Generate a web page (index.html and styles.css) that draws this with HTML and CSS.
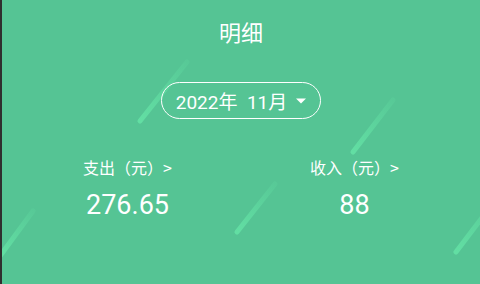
FILE: index.html
```html
<!DOCTYPE html>
<html lang="zh">
<head>
<meta charset="utf-8">
<link rel="stylesheet" href="styles.css">
</head>
<body>
<div class="page">
  <svg class="streaks" width="480" height="284" viewBox="0 0 480 284" aria-hidden="true">
    <defs>
      <linearGradient id="g1" gradientUnits="userSpaceOnUse" x1="140" y1="121" x2="187" y2="62">
        <stop offset="0" stop-color="#62dea3"/><stop offset="1" stop-color="#62dea3" stop-opacity="0.2"/>
      </linearGradient>
      <linearGradient id="g2" gradientUnits="userSpaceOnUse" x1="353" y1="152" x2="393" y2="100">
        <stop offset="0" stop-color="#62dea3"/><stop offset="1" stop-color="#62dea3" stop-opacity="0.2"/>
      </linearGradient>
      <linearGradient id="g3" gradientUnits="userSpaceOnUse" x1="237" y1="232" x2="275" y2="184">
        <stop offset="0" stop-color="#62dea3"/><stop offset="1" stop-color="#62dea3" stop-opacity="0.2"/>
      </linearGradient>
      <linearGradient id="g4" gradientUnits="userSpaceOnUse" x1="2" y1="254" x2="33" y2="211">
        <stop offset="0" stop-color="#62dea3"/><stop offset="1" stop-color="#62dea3" stop-opacity="0.2"/>
      </linearGradient>
      <linearGradient id="g5" gradientUnits="userSpaceOnUse" x1="456" y1="252" x2="484" y2="215">
        <stop offset="0" stop-color="#62dea3"/><stop offset="1" stop-color="#62dea3" stop-opacity="0.5"/>
      </linearGradient>
    </defs>
    <g stroke-width="5" stroke-linecap="round" fill="none">
      <line x1="140" y1="121" x2="187" y2="62" stroke="url(#g1)"/>
      <line x1="353" y1="152" x2="393" y2="100" stroke="url(#g2)"/>
      <line x1="237" y1="232" x2="275" y2="184" stroke="url(#g3)"/>
      <line x1="0" y1="256" x2="33" y2="211" stroke="url(#g4)"/>
      <line x1="456" y1="252" x2="484" y2="215" stroke="url(#g5)"/>
    </g>
  </svg>
  <h1 class="title">明细</h1>
  <div class="picker">
    <span class="picker-text">2022年&nbsp;&nbsp;11月</span>
    <svg class="caret" width="10" height="6" viewBox="0 0 10 6"><path d="M0 0.5h10L5 5.5z" fill="#fff"/></svg>
  </div>
  <div class="stats">
    <div class="stat">
      <div class="label">支出（元）&gt;</div>
      <div class="value">276.65</div>
    </div>
    <div class="stat">
      <div class="label">收入（元）&gt;</div>
      <div class="value">88</div>
    </div>
  </div>
</div>
</body>
</html>
```
FILE: styles.css
```css
html, body {
  margin: 0;
  padding: 0;
}
body {
  width: 480px;
  height: 284px;
  overflow: hidden;
  font-family: Roboto, "Noto Sans CJK SC", sans-serif;
  color: #fff;
}
.page {
  position: relative;
  box-sizing: border-box;
  width: 480px;
  height: 284px;
  background: #55c494;
  border-left: 2px solid #2f2f2f;
  display: flex;
  flex-direction: column;
  align-items: center;
  overflow: hidden;
}
.streaks {
  position: absolute;
  left: -2px;
  top: 0;
}
.title {
  position: relative;
  margin: 16px 0 0;
  font-size: 22px;
  line-height: 30px;
  font-weight: 400;
  font-family: "Noto Sans CJK SC", sans-serif;
}
.picker {
  position: relative;
  margin-top: 36px;
  box-sizing: border-box;
  width: 160px;
  height: 37px;
  border: 1.5px solid #fff;
  border-radius: 19px;
  display: flex;
  align-items: center;
  justify-content: center;
  gap: 9px;
  font-size: 19px;
}
.picker-text {
  font-family: Roboto, "Noto Sans CJK SC", sans-serif;
}
.caret {
  margin-top: 1px;
}
.stats {
  position: relative;
  margin-top: 36px;
  display: grid;
  grid-template-columns: 227px 227px;
}
.stat {
  display: flex;
  flex-direction: column;
  align-items: center;
}
.label {
  font-family: "Noto Sans CJK SC", sans-serif;
  font-size: 16px;
  line-height: 24px;
}
.value {
  margin-top: 10px;
  font-family: Roboto, sans-serif;
  font-size: 27px;
  line-height: 32px;
}
```
